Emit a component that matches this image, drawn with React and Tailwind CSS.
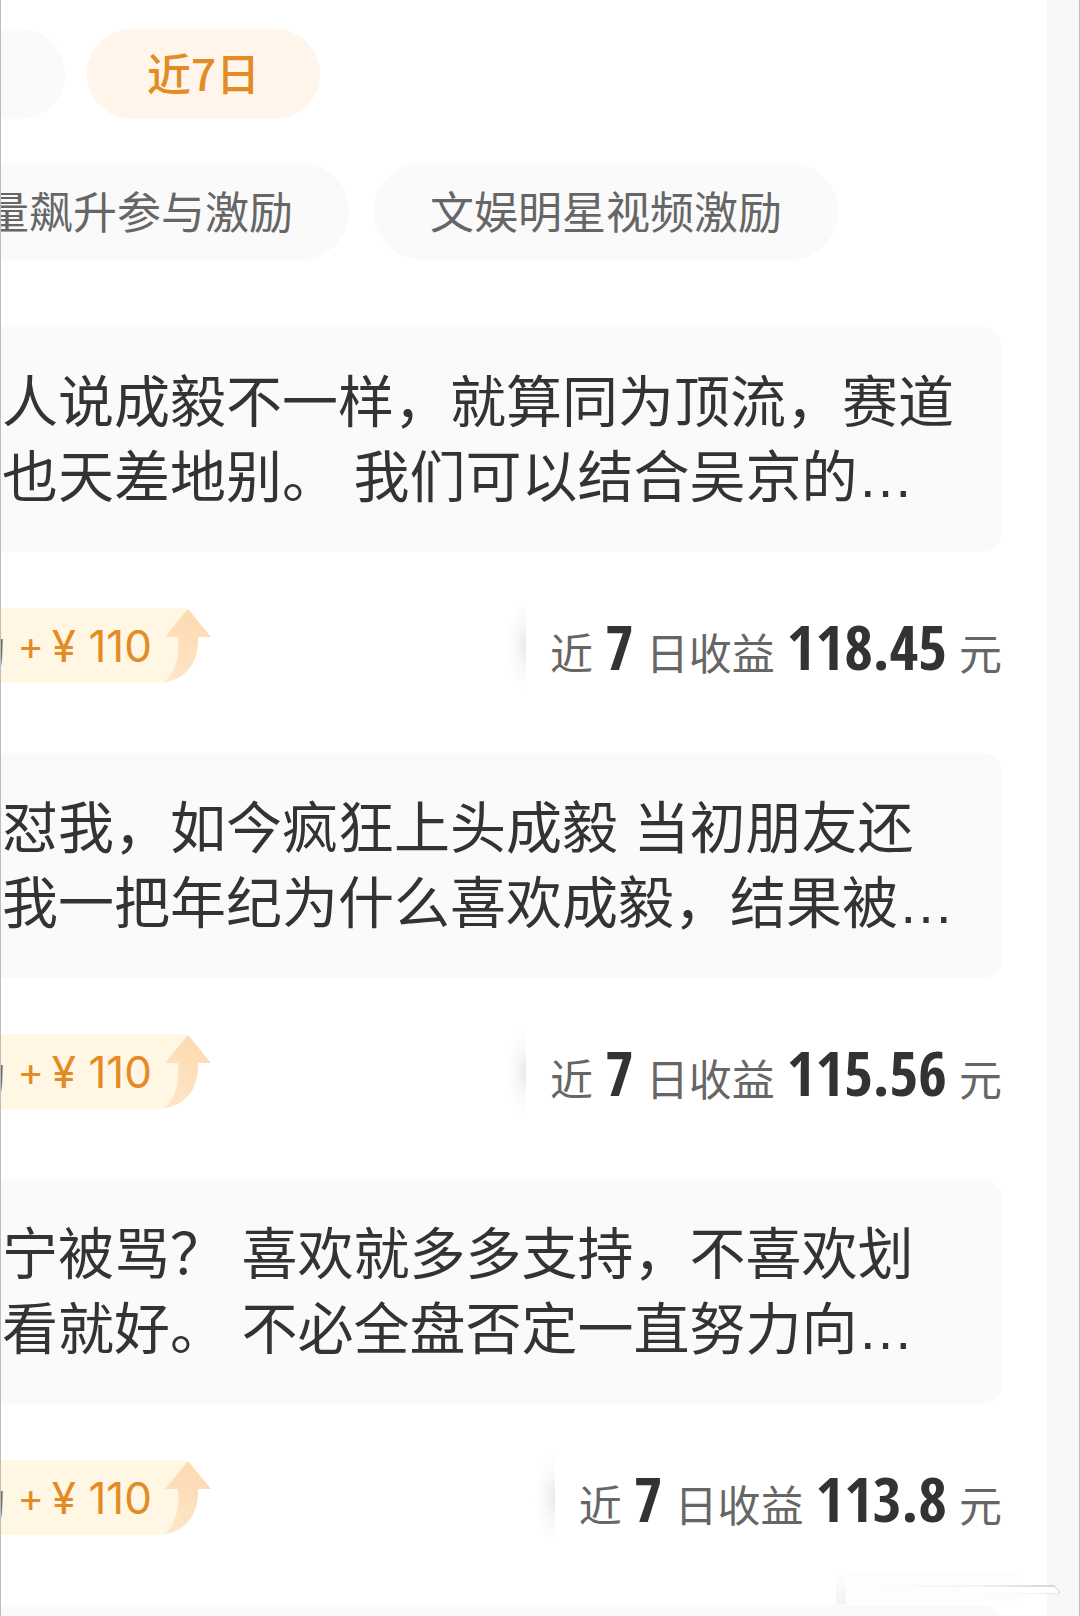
import React from 'react'

const posts = [
  {
    lines: ['人说成毅不一样，就算同为顶流，赛道', '也天差地别。 我们可以结合吴京的…'],
    bonus: '110',
    income: '118.45',
  },
  {
    lines: ['怼我，如今疯狂上头成毅 当初朋友还', '我一把年纪为什么喜欢成毅，结果被…'],
    bonus: '110',
    income: '115.56',
  },
  {
    lines: ['宁被骂？ 喜欢就多多支持，不喜欢划', '看就好。 不必全盘否定一直努力向…'],
    bonus: '110',
    income: '113.8',
  },
]

function RiseArrow() {
  return (
    <svg viewBox="0 0 48 75" className="h-[75px] w-12 shrink-0" aria-hidden="true">
      <defs>
        <linearGradient id="rise" x1="0.6" y1="0" x2="0.3" y2="1">
          <stop offset="0" stopColor="#fdd9b0" />
          <stop offset="1" stopColor="#fee6c8" />
        </linearGradient>
      </defs>
      {/* end of the label background, tucked under the arrow */}
      <path d="M0 0H22L15 29V50Q10 66 0 75Z" fill="#fff6e3" />
      <path d="M24 1L47 29H34C35 50 26 70 0 74.500C11 65 16 50 14 29H1Z" fill="url(#rise)" />
    </svg>
  )
}

function Bonus({ amount }) {
  return (
    <div className="flex h-[75px] w-[211px] items-center justify-end overflow-hidden">
      <div className="flex h-full grow items-center justify-end gap-2 bg-[#fff6e3] pr-3 text-[44px] leading-none whitespace-nowrap text-[#e38b24]">
        <span className="mr-1 text-[#83683a]">励</span>
        <span className="font-['Inter','Noto_Sans_CJK_SC',sans-serif] text-[40px]">+</span>
        <span className="font-['Inter','Noto_Sans_CJK_SC',sans-serif]">¥ {amount}</span>
      </div>
      <RiseArrow />
    </div>
  )
}

function Income({ amount }) {
  return (
    <div className="flex h-28 items-stretch">
      <div className="w-5 bg-[radial-gradient(ellipse_100%_40%_at_right,#e9e9e9,#f8f8f8_50%,#ffffff)]" />
      <p className="flex items-baseline gap-3 bg-white pt-6 pl-6 text-[43px] leading-[64px] whitespace-nowrap text-[#666666]">
        近
        <b className="font-['Open_Sans_Condensed','Noto_Sans_ExtraCondensed','Roboto_Condensed',sans-serif] text-[62px] font-bold text-[#333333]">7</b>
        日收益
        <b className="font-['Noto_Sans_ExtraCondensed','Open_Sans_Condensed','Roboto_Condensed',sans-serif] text-[62px] font-bold text-[#333333]">{amount}</b>
        元
      </p>
    </div>
  )
}

function Post({ post }) {
  return (
    <article>
      <div className="mr-[45px] rounded-r-[20px] bg-[#fafafa] pt-[38px] pb-[37px] pl-px font-['Liberation_Sans','Noto_Sans_CJK_SC',sans-serif] text-[56px] leading-[75px] text-[#333333]">
        {post.lines.map((line) => (
          <p key={line} className="whitespace-nowrap">{line}</p>
        ))}
      </div>
      <div className="flex h-[201px] items-center justify-between pr-[45px] pb-[14px]">
        <Bonus amount={post.bonus} />
        <Income amount={post.income} />
      </div>
    </article>
  )
}

export default function App() {
  return (
    <div className="relative flex h-screen overflow-hidden border-x border-[#bdbdbd] bg-[#f7f7f7] font-['Noto_Sans_CJK_SC',sans-serif]">
      <main className="mr-8 min-w-0 grow bg-white pt-[29px]">
        <div className="flex gap-[22px]">
          <button type="button" aria-label="昨日" className="-ml-16 h-[90px] w-32 rounded-full bg-[#fafafa]" />
          <button type="button" className="h-[90px] rounded-full bg-[#fff5ea] px-[60px] pb-1 text-[44px] leading-none font-medium text-[#e38b24]">
            近7日
          </button>
        </div>

        <div className="mt-11 mb-[67px] flex gap-[25px] whitespace-nowrap">
          <button type="button" className="-ml-[72px] h-[97px] rounded-full bg-[#fafafa] px-14 pb-1 text-[44px] leading-none text-[#666666]">
            量飙升参与激励
          </button>
          <button type="button" className="h-[97px] rounded-full bg-[#fafafa] px-14 pb-1 text-[44px] leading-none text-[#666666]">
            文娱明星视频激励
          </button>
        </div>

        {posts.map((post) => (
          <Post key={post.income} post={post} />
        ))}
        <div className="mr-[45px] h-56 rounded-r-[20px] bg-[#fafafa]" />
      </main>

      <svg viewBox="0 0 240 40" className="absolute right-4 bottom-2 h-10 w-60" aria-hidden="true">
        <defs>
          <linearGradient id="streak" x1="0" x2="1">
            <stop offset="0" stopColor="#d4d4d4" stopOpacity="0" />
            <stop offset="0.6" stopColor="#d4d4d4" stopOpacity="0.3" />
            <stop offset="1" stopColor="#d4d4d4" />
          </linearGradient>
          <linearGradient id="smudge" x1="0" x2="0" y1="0" y2="1">
            <stop offset="0" stopColor="#f4f4f4" stopOpacity="0" />
            <stop offset="1" stopColor="#f2f2f2" />
          </linearGradient>
        </defs>
        <rect x="13" y="2" width="10" height="34" fill="url(#smudge)" />
        <rect x="24" y="4" width="175" height="30" fill="#fdfdfd" />
        <path d="M60 17H232V19H60Z" fill="url(#streak)" />
        <path d="M140 19H232L236 24L230 25H140Z" fill="#ffffff" />
        <path d="M140 25H232V26H140Z" fill="url(#streak)" opacity="0.5" />
        <path d="M231 18L237 24L234 27" fill="none" stroke="#d0d0d0" />
      </svg>
    </div>
  )
}
